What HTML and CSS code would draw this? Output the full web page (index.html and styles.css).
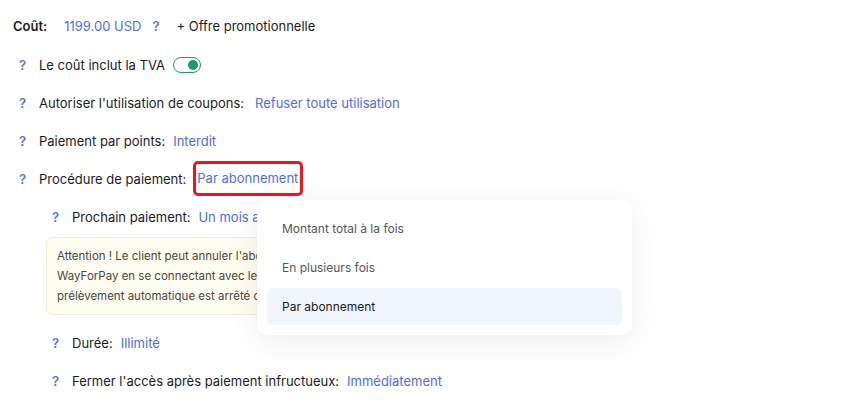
FILE: index.html
```html
<!DOCTYPE html>
<html lang="fr">
<head>
    <meta charset="UTF-8">
    <meta name="viewport" content="width=device-width, initial-scale=1.0">
    <title>Paramètres du paiement</title>
    <link rel="stylesheet" href="styles.css">
</head>
<body>
    <div class="settings">
        <div class="row price-row">
            <span class="price-label">Coût:</span>
            <span class="link price">1199.00 USD</span>
            <span class="help">?</span>
            <span class="promo">+ Offre promotionnelle</span>
        </div>
        <div class="row">
            <span class="help">?</span>
            <span class="label">Le coût inclut la TVA</span>
            <span class="toggle"><span class="knob"></span></span>
        </div>
        <div class="row">
            <span class="help">?</span>
            <span class="label wide">Autoriser l'utilisation de coupons:</span>
            <span class="link">Refuser toute utilisation</span>
        </div>
        <div class="row">
            <span class="help">?</span>
            <span class="label">Paiement par points:</span>
            <span class="link">Interdit</span>
        </div>
        <div class="row">
            <span class="help">?</span>
            <span class="label">Procédure de paiement:</span>
            <span class="link selected-link">Par abonnement</span>
        </div>
        <div class="sub">
            <div class="row">
                <span class="help">?</span>
                <span class="label">Prochain paiement:</span>
                <span class="link">Un mois après le paiement</span>
            </div>
            <div class="notice">
                Attention ! Le client peut annuler l'abonnement à tout moment dans son espace personnel<br>
                WayForPay en se connectant avec le numéro de téléphone utilisé lors du paiement. Dans ce cas, le<br>
                prélèvement automatique est arrêté dès la fin de la période déjà payée.
            </div>
            <div class="row">
                <span class="help">?</span>
                <span class="label">Durée:</span>
                <span class="link">Illimité</span>
            </div>
            <div class="row">
                <span class="help">?</span>
                <span class="label">Fermer l'accès après paiement infructueux:</span>
                <span class="link">Immédiatement</span>
            </div>
        </div>
    </div>

    <ul class="dropdown">
        <li>Montant total à la fois</li>
        <li>En plusieurs fois</li>
        <li class="active">Par abonnement</li>
    </ul>
</body>
</html>
```

FILE: styles.css
```css
body {
    margin: 0;
    font-family: 'Inter', 'Noto Sans', sans-serif;
    font-size: 13px;
    color: #1b1b1f;
    background-color: #fff;
}
.settings {
    padding: 16px 0 0 13px;
    display: flex;
    flex-direction: column;
    gap: 18px;
}
.row {
    display: flex;
    align-items: center;
    height: 20px;
    line-height: 20px;
    white-space: nowrap;
}
.price-row {
    margin-bottom: 1px;
}
.price-label {
    font-weight: 600;
    margin-right: 17px;
}
.price {
    margin-right: 11px;
}
.promo {
    margin-left: 4px;
}
.help {
    color: #5b6cf5;
    font-weight: 600;
    width: 12px;
    padding-left: 6px;
    margin-right: 8px;
}
.price-row .help {
    padding-left: 0;
}
.label {
    margin-right: 8px;
}
.label.wide {
    margin-right: 11px;
}
.link {
    color: #4f6af6;
}
.selected-link {
    outline: 3px solid #f0141e;
    border-radius: 2px;
    padding: 4px 2px 5px 1px;
    margin-top: -2px;
    margin-left: 2px;
}
.toggle {
    display: inline-flex;
    align-items: center;
    justify-content: flex-end;
    box-sizing: border-box;
    width: 28px;
    height: 16px;
    border: 1.5px solid #1f9a6b;
    border-radius: 8px;
    padding: 0 2px;
}
.knob {
    width: 10px;
    height: 10px;
    border-radius: 50%;
    background-color: #1f9a6b;
}
.sub {
    padding-left: 33px;
    display: flex;
    flex-direction: column;
    gap: 18px;
}
.notice {
    box-sizing: border-box;
    width: 560px;
    margin-top: -8px;
    padding: 8px 10px;
    background-color: #fffcf2;
    border: 1px solid #f4ecd0;
    border-radius: 6px;
    font-size: 11.5px;
    line-height: 20px;
    color: #4a4640;
    white-space: nowrap;
    overflow: hidden;
}
.dropdown {
    position: absolute;
    left: 257px;
    top: 200px;
    width: 375px;
    box-sizing: border-box;
    margin: 0;
    padding: 10px;
    list-style: none;
    background-color: #fff;
    border-radius: 10px;
    box-shadow: 0 6px 30px rgba(40, 50, 80, 0.09);
    display: flex;
    flex-direction: column;
    gap: 2px;
}
.dropdown li {
    height: 37px;
    line-height: 37px;
    padding-left: 15px;
    border-radius: 6px;
    font-size: 12px;
    color: #55555c;
}
.dropdown li.active {
    background-color: #f0f5fe;
    color: #1b1b1f;
}
```
